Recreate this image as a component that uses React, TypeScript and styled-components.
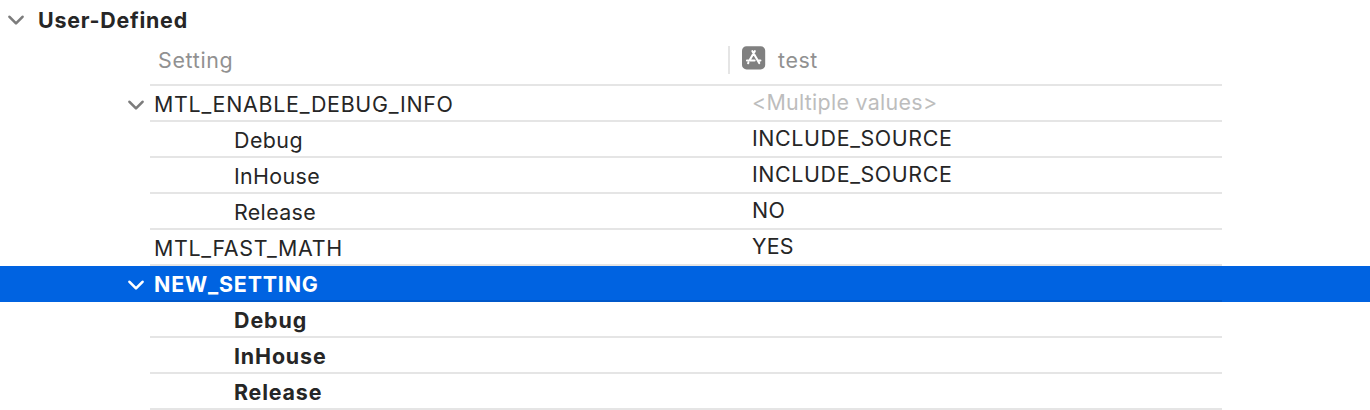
import React from "react";
import styled, { createGlobalStyle } from "styled-components";

const GlobalStyle = createGlobalStyle`
  body {
    margin: 0;
    background: #fff;
    color: #262626;
    font-family: Inter, "Liberation Sans", sans-serif;
    font-size: 21.4px;
    -webkit-font-smoothing: antialiased;
  }
`;

const Panel = styled.main`
  width: 1370px;
  height: 410px;
  overflow: hidden;
  display: flex;
  flex-direction: column;
`;

const GroupHeader = styled.header`
  display: flex;
  align-items: center;
  height: 40px;
  padding-left: 8px;
  gap: 14px;
`;

const Label = styled.span<{ $tracking?: number }>`
  white-space: nowrap;
  line-height: 26px;
  letter-spacing: ${(p) => p.$tracking ?? 0}px;
`;

const GroupTitle = styled(Label)`
  font-weight: 700;
`;

const ColumnHeader = styled.div`
  display: flex;
  align-items: center;
  box-sizing: border-box;
  width: 1072px;
  height: 46px;
  margin-left: 150px;
  padding: 2px 0 2px 8px;
  border-bottom: 2px solid #e5e5e5;
  color: #919191;
`;

const SettingHeading = styled.div`
  display: flex;
  width: 570px;
  padding-bottom: 4px;
`;

const TargetHeading = styled.div`
  display: flex;
  align-items: center;
  height: 28px;
  padding-left: 12px;
  border-left: 2px solid #e5e5e5;
  margin-bottom: 4px;
`;

const AppIcon = styled.svg`
  width: 24px;
  height: 24px;
  margin: -5px 12px 0 0;
`;

const Row = styled.div<{ $selected?: boolean; $bold?: boolean }>`
  display: flex;
  flex: none;
  height: 36px;
  background: ${(p) => (p.$selected ? "#0063e1" : "transparent")};
  color: ${(p) => (p.$selected ? "#fff" : "inherit")};
  font-weight: ${(p) => (p.$bold ? 700 : 400)};
`;

const Gutter = styled.div`
  display: flex;
  align-items: center;
  justify-content: flex-end;
  box-sizing: border-box;
  width: 150px;
  padding: 1px 6px 0 0;
`;

const Cells = styled.div<{ $selected?: boolean }>`
  display: flex;
  box-sizing: border-box;
  width: 1072px;
  border-bottom: 2px solid ${(p) => (p.$selected ? "#0058ca" : "#e5e5e5")};
`;

const NameCell = styled.div<{ $nested?: boolean }>`
  display: flex;
  align-items: flex-start;
  box-sizing: border-box;
  width: 602px;
  padding: 5px 0 0 ${(p) => (p.$nested ? 84 : 4)}px;
`;

const ValueCell = styled.div<{ $muted?: boolean }>`
  display: flex;
  align-items: flex-start;
  padding-top: 3px;
  color: ${(p) => (p.$muted ? "#bdbdbd" : "inherit")};
`;

const Chevron = ({ color = "#7c7c7c" }: { color?: string }) => (
  <svg width="16" height="10" viewBox="0 0 16 10" fill="none" stroke={color} strokeWidth="2.6" strokeLinecap="round" strokeLinejoin="round">
    <path d="M1.5 1.8 8 8.4l6.5-6.6" />
  </svg>
);

interface Setting {
  name: string;
  value?: string;
  nested?: boolean;
  expanded?: boolean;
  selected?: boolean;
  bold?: boolean;
  muted?: boolean;
  nameTracking?: number;
  valueTracking?: number;
}

const settings: Setting[] = [
  { name: "MTL_ENABLE_DEBUG_INFO", value: "<Multiple values>", expanded: true, muted: true, nameTracking: 0.73, valueTracking: 0.3 },
  { name: "Debug", value: "INCLUDE_SOURCE", nested: true, nameTracking: 0.45, valueTracking: 0.62 },
  { name: "InHouse", value: "INCLUDE_SOURCE", nested: true, nameTracking: 0.35, valueTracking: 0.62 },
  { name: "Release", value: "NO", nested: true, nameTracking: 0.35, valueTracking: 0.4 },
  { name: "MTL_FAST_MATH", value: "YES", nameTracking: 0.68, valueTracking: 0.2 },
  { name: "NEW_SETTING", expanded: true, selected: true, bold: true, nameTracking: 0.83 },
  { name: "Debug", nested: true, bold: true, nameTracking: 0.95 },
  { name: "InHouse", nested: true, bold: true, nameTracking: 0.86 },
  { name: "Release", nested: true, bold: true, nameTracking: 0.83 },
];

export default function App() {
  return (
    <>
      <GlobalStyle />
      <Panel>
        <GroupHeader>
          <Chevron />
          <GroupTitle $tracking={0.78}>User-Defined</GroupTitle>
        </GroupHeader>
        <ColumnHeader>
          <SettingHeading>
            <Label $tracking={0.68}>Setting</Label>
          </SettingHeading>
          <TargetHeading>
            <AppIcon viewBox="0 0 24 24" fill="none">
              <rect x="0" y="0.2" width="23.2" height="23.2" rx="4.5" fill="#808080" />
              <g stroke="#fff" strokeWidth="2.1" strokeLinecap="round">
                <path d="M12.8 5.2 8 13.6M10.4 5.2l6.8 11.9M5 14.5h7.6M16.2 14.5h2.2M6.4 16.7l-.3.5" />
              </g>
            </AppIcon>
            <Label $tracking={0.6}>test</Label>
          </TargetHeading>
        </ColumnHeader>
        {settings.map((s, i) => (
          <Row key={i} $selected={s.selected} $bold={s.bold}>
            <Gutter>{s.expanded && <Chevron color={s.selected ? "#fff" : undefined} />}</Gutter>
            <Cells $selected={s.selected}>
              <NameCell $nested={s.nested}>
                <Label $tracking={s.nameTracking}>{s.name}</Label>
              </NameCell>
              <ValueCell $muted={s.muted}>
                <Label $tracking={s.valueTracking}>{s.value}</Label>
              </ValueCell>
            </Cells>
          </Row>
        ))}
      </Panel>
    </>
  );
}
